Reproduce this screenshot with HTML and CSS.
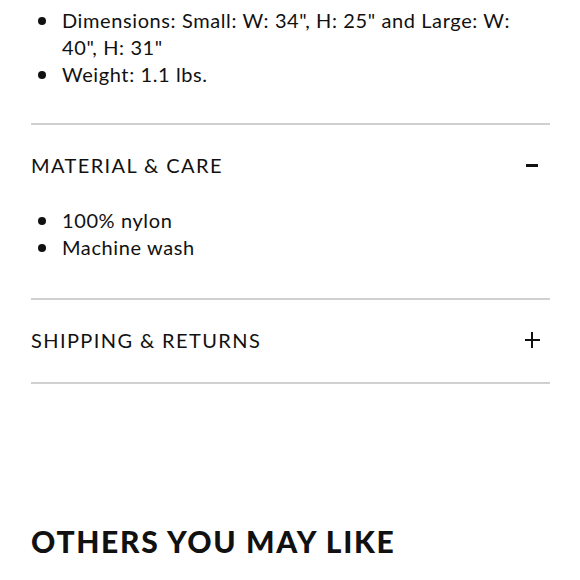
FILE: index.html
```html
<!DOCTYPE html>
<html lang="en">
<head>
    <meta charset="UTF-8">
    <meta name="viewport" content="width=device-width, initial-scale=1.0">
    <title>Product details</title>
    <link rel="stylesheet" href="styles.css">
</head>
<body>

<div class="container">
    <div class="section first">
        <ul class="bullets">
            <li>Dimensions: Small: W: 34", H: 25" and Large: W: 40", H: 31"</li>
            <li>Weight: 1.1 lbs.</li>
        </ul>
    </div>

    <div class="section">
        <div class="section-head">
            <span class="section-title">MATERIAL &amp; CARE</span>
            <span class="toggle minus"></span>
        </div>
        <ul class="bullets">
            <li>100% nylon</li>
            <li>Machine wash</li>
        </ul>
    </div>

    <div class="section">
        <div class="section-head">
            <span class="section-title">SHIPPING &amp; RETURNS</span>
            <span class="toggle plus"></span>
        </div>
    </div>

    <h2 class="others">OTHERS YOU MAY LIKE</h2>
</div>

</body>
</html>
```

FILE: styles.css
```css
body {
    margin: 0;
    font-family: Lato, 'Open Sans', sans-serif;
    background-color: #fff;
    color: #111;
}
.container {
    padding: 7px 30px 0 31px;
}
.section {
    border-bottom: 2px solid #d0d0d0;
}
.section.first ul {
    margin-bottom: 35px;
    padding-right: 20px;
}
.bullets {
    margin: 0 0 37px 0;
    padding: 0 0 0 31px;
    font-size: 20px;
    line-height: 27px;
    letter-spacing: 0.6px;
    list-style: none;
}
.bullets li {
    position: relative;
}
.bullets li::before {
    content: "";
    position: absolute;
    left: -24px;
    top: 10px;
    width: 8px;
    height: 8px;
    border-radius: 50%;
    background-color: #111;
}
.section-head {
    display: flex;
    justify-content: space-between;
    align-items: center;
    height: 80px;
    padding-bottom: 2px;
}
.section-title {
    font-size: 20px;
    letter-spacing: 1.4px;
    margin-top: -1px;
}
.toggle {
    position: relative;
    height: 15px;
}
.toggle::before, .toggle::after {
    content: "";
    position: absolute;
    background-color: #111;
}
.minus {
    width: 12px;
    margin-right: 12px;
}
.minus::before {
    left: 0;
    right: 0;
    top: 6px;
    height: 3px;
}
.plus {
    width: 15px;
    margin-right: 10px;
}
.plus::before {
    left: 0;
    right: 0;
    top: 6px;
    height: 2px;
}
.plus::after {
    top: -1px;
    bottom: 0;
    left: 6px;
    width: 2px;
}
.others {
    margin: 139px 0 0 0;
    font-size: 30px;
    font-weight: 900;
    letter-spacing: 1.7px;
}
```
